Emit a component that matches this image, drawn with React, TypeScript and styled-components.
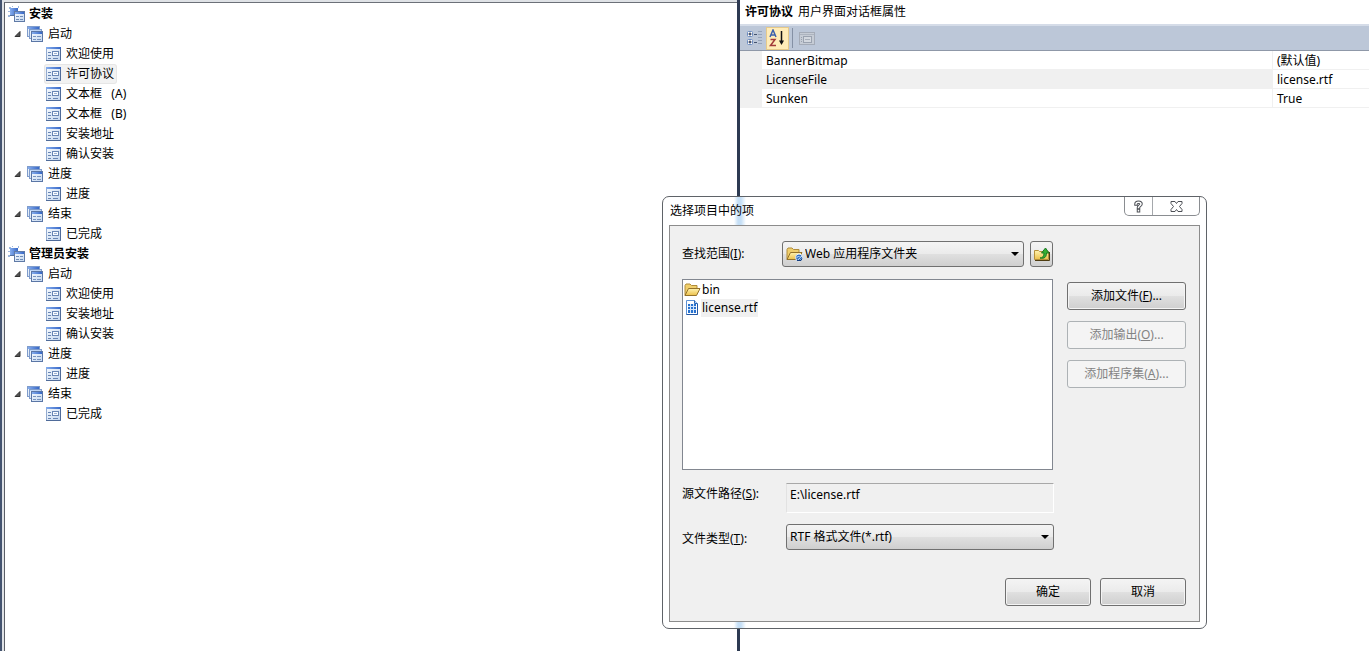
import React from 'react';
import styled, { createGlobalStyle, css } from 'styled-components';

const Global = createGlobalStyle`
  * { box-sizing: border-box; }
  body { margin: 0; background: #fff; color: #000; }
  body, button, select, input, table {
    font-family: "Noto Sans", "Noto Sans CJK SC", sans-serif;
    font-size: 12px;
    line-height: 20px;
  }
`;

const Page = styled.div`
  position: relative;
  display: grid;
  grid-template-columns: 20fr 17fr;
  min-height: 100vh;
`;

const TreePane = styled.nav`
  display: flex;
  flex-direction: column;
  border-left: 2px solid #43536f;
  border-right: 3px solid #2d3a52;
  background: #dfe2e6;
  padding: 2px 0 0 2px;
`;

const TreeBody = styled.div`
  flex: 1;
  border-left: 1px solid #5a5e66;
  border-top: 1px solid #6c7078;
  background: #fff;
  padding: 1px 0 0 3px;
`;

const List = styled.ul`
  list-style: none;
  margin: 0;
  padding: 0;
`;

const Row = styled.div<{ $level: number; $bold?: boolean }>`
  display: flex;
  align-items: center;
  height: 20px;
  padding-left: ${p => [0, 5, 37][p.$level]}px;
  gap: 4px;
  font-weight: ${p => (p.$bold ? 700 : 400)};
`;

const selection = css`
  background: #f2f2f2;
  box-shadow: 0 0 0 1px #e6e6e6;
`;

const Item = styled.span<{ $selected?: boolean }>`
  display: flex;
  align-items: center;
  gap: 5px;
  height: 18px;
  padding: 0 2px 0 1px;
  border-radius: 2px;
  white-space: pre;
  ${p => p.$selected && selection}
`;

const PropPane = styled.section`
  background: #fff;
  min-width: 0;
`;

const PropTitle = styled.h2`
  display: flex;
  gap: 5px;
  margin: 0;
  height: 24px;
  line-height: 24px;
  padding-left: 5px;
  font-size: 12px;
  font-weight: 400;
`;

const Toolbar = styled.div`
  display: flex;
  align-items: center;
  height: 27px;
  background: #bcc7d8;
  border-top: 2px solid #d5dce8;
  border-bottom: 1px solid #8f98a8;
  padding-left: 3px;
`;

const Tool = styled.button<{ $active?: boolean }>`
  display: flex;
  align-items: center;
  justify-content: center;
  width: 23px;
  height: 23px;
  padding: 0;
  border: 1px solid ${p => (p.$active ? '#e5c98a' : 'transparent')};
  background: ${p => (p.$active ? '#ffecb8' : 'transparent')};
`;

const Divider = styled.span`
  width: 1px;
  height: 20px;
  margin: 0 2px 0 3px;
  background: #8591a5;
`;

const PropTable = styled.table`
  width: 100%;
  border-collapse: separate;
  border-spacing: 0;
  table-layout: fixed;
  border-left: 22px solid #f0f0f0;
`;

const cell = css`
  height: 19px;
  line-height: 16px;
  padding: 2px 0 0 4px;
  text-align: left;
  font-weight: 400;
  border-bottom: 1px solid #f0f0f0;
`;

const Name = styled.th<{ $selected?: boolean }>`
  ${cell}
  border-right: 1px solid #f0f0f0;
  background: ${p => (p.$selected ? '#f0f0f0' : '#fff')};
`;

const Value = styled.td`
  ${cell}
  width: 96px;
`;

const Dialog = styled.div`
  position: absolute;
  left: 662px;
  top: 196px;
  width: 545px;
  border: 1px solid #5f6368;
  border-radius: 7px;
  background: linear-gradient(90deg, #fff 71px, #c5dff6 75px, #c5dff6 78px, #fff 83px);
  padding: 0 6px 6px;
`;

const TitleBar = styled.header`
  display: flex;
  justify-content: space-between;
  height: 28px;
`;

const DialogTitle = styled.h1`
  margin: 0;
  padding-left: 1px;
  font-size: 12px;
  line-height: 28px;
  font-weight: 400;
`;

const Caption = styled.div`
  display: flex;
  height: 19px;
  border: 1px solid #8a8d91;
  border-top: 0;
  border-radius: 0 0 5px 5px;
`;

const CaptionButton = styled.button<{ $wide?: boolean }>`
  display: flex;
  align-items: center;
  justify-content: center;
  width: ${p => (p.$wide ? 47 : 27)}px;
  padding: 0;
  border: 0;
  border-left: ${p => (p.$wide ? '1px solid #a5a8ac' : '0')};
  background: transparent;
`;

const Client = styled.form`
  border: 1px solid #8c8c8c;
  background: #f0f0f0;
  padding: 15px 13px 15px 12px;
`;

const Columns = styled.div`
  display: flex;
  justify-content: space-between;
  align-items: flex-start;
`;

const Main = styled.div`
  width: 372px;
`;

const Field = styled.div<{ $gap: number; $align: string }>`
  display: flex;
  align-items: ${p => p.$align};
  margin-bottom: ${p => p.$gap}px;
`;

const FieldLabel = styled.label<{ $width: number }>`
  flex: 0 0 ${p => p.$width}px;
  line-height: 22px;
`;

const raised = css`
  border: 1px solid #707070;
  border-radius: 3px;
  background: linear-gradient(#f4f4f4, #ebebeb 48%, #dfdfdf 52%, #cfcfcf);
`;

const Combo = styled.div`
  display: flex;
  align-items: center;
  gap: 2px;
  flex: 1;
  height: 26px;
  padding: 0 4px 0 3px;
  ${raised}
`;

const Select = styled.select`
  appearance: none;
  flex: 1;
  min-width: 0;
  height: 24px;
  padding: 0;
  border: 0;
  outline: 0;
  background: transparent;
  color: #000;
`;

const UpButton = styled.button`
  display: flex;
  align-items: center;
  justify-content: center;
  width: 23px;
  height: 26px;
  margin: 0 1px 0 6px;
  padding: 0;
  ${raised}
`;

const FileList = styled.ul`
  list-style: none;
  width: 371px;
  height: 191px;
  margin: 0 0 13px;
  padding: 1px;
  border: 1px solid #828790;
  background: #fff;
`;

const FileRow = styled.li`
  display: flex;
  align-items: center;
  height: 18px;
`;

const FileName = styled.span<{ $selected?: boolean }>`
  height: 18px;
  line-height: 18px;
  padding: 0 1px;
  background: ${p => (p.$selected ? '#f0f0f0' : 'transparent')};
`;

const PathBox = styled.input`
  flex: 1;
  min-width: 0;
  height: 30px;
  padding: 0 3px 8px;
  border: 1px solid #fff;
  border-top-color: #a8a8a8;
  border-left-color: #e2e2e2;
  outline: 0;
  background: #f0f0f0;
  color: #000;
`;

const Side = styled.div`
  display: flex;
  flex-direction: column;
  gap: 11px;
  padding-top: 41px;
`;

const Button = styled.button<{ $width: number }>`
  width: ${p => p.$width}px;
  height: 28px;
  padding: 0;
  color: #000;
  ${raised}
  box-shadow: inset 0 0 0 1px #f4f4f4;
  &:disabled {
    border-color: #adb2b5;
    background: #f4f4f4;
    color: #838383;
  }
`;

const Footer = styled.footer`
  display: flex;
  justify-content: flex-end;
  gap: 9px;
`;

const Gradients = () => (
  <svg width="0" height="0" style={{ position: 'absolute' }} aria-hidden="true">
    <defs>
      <linearGradient id="bar" x1="0" y1="0" x2="1" y2="0">
        <stop offset="0" stopColor="#86aeee" />
        <stop offset="1" stopColor="#3767c6" />
      </linearGradient>
      <linearGradient id="pane" x1="0" y1="0" x2="1" y2="1">
        <stop offset="0" stopColor="#f6faff" />
        <stop offset="1" stopColor="#c3d6ee" />
      </linearGradient>
      <linearGradient id="folder" x1="0" y1="0" x2="0" y2="1">
        <stop offset="0" stopColor="#fff3b0" />
        <stop offset="1" stopColor="#ecc04a" />
      </linearGradient>
    </defs>
  </svg>
);

const RootIcon = () => (
  <svg width="17" height="16" viewBox="0 0 17 16">
    <path d="M1 1h2v2H1zM4 0h1v1H4zM0 5h2v1H0zM0 9h2v2H0zM10 0h1v2h-1z" fill="#9db7de" />
    <rect x="2" y="2" width="8" height="8" fill="url(#bar)" />
    <path d="M2 9.500h4" stroke="#54719f" />
    <rect x="6.500" y="5.500" width="10" height="10" fill="url(#pane)" stroke="#5f7aa6" />
    <path d="M7 6h9v2H7z" fill="url(#bar)" />
    <path d="M8 10h3v1H8zM12 10h3v1h-3zM8 13h3v1H8zM12 13h3v1h-3z" fill="#6f8db8" />
  </svg>
);

const FolderStackIcon = () => (
  <svg width="17" height="16" viewBox="0 0 17 16">
    <rect x="0.500" y="0.500" width="12" height="10" fill="url(#pane)" stroke="#7f9ccb" />
    <path d="M1 1h11v2H1z" fill="url(#bar)" />
    <rect x="2.500" y="3.500" width="12" height="9" fill="url(#pane)" stroke="#7f9ccb" />
    <path d="M3 4h11v1H3z" fill="#bfd5f5" />
    <rect x="4.500" y="5.500" width="11" height="10" fill="url(#pane)" stroke="#5a76a6" />
    <path d="M5 6h10v2H5z" fill="url(#bar)" />
    <path d="M6 10h3v1H6zM10 10h4v1h-4zM6 13h3v1H6zM10 13h4v1h-4z" fill="#7894bf" />
  </svg>
);

const FormIcon = () => (
  <svg width="15" height="14" viewBox="0 0 15 14">
    <rect x="0.500" y="0.500" width="14" height="13" fill="url(#pane)" stroke="#93abd0" />
    <path d="M14.500 0v13.500H0" fill="none" stroke="#4f6b99" />
    <path d="M0 0h15v2H0z" fill="url(#bar)" />
    <path d="M2 5h3v1H2zM2 8h3v1H2zM2 11h3v1H2zM7 11h5v1H7z" fill="#6886b4" />
    <rect x="6.500" y="4.500" width="6" height="4" fill="#f8fbff" stroke="#6886b4" />
    <path d="M8 6.500h3" stroke="#9bb2d3" />
  </svg>
);

const Expander = () => (
  <svg width="10" height="8" viewBox="0 0 10 8">
    <path d="M7 1.500v5H2z" fill="#555" stroke="#333" strokeLinejoin="round" />
  </svg>
);

const CategoryIcon = () => (
  <svg width="17" height="16" viewBox="0 0 17 16">
    <g fill="#fff" stroke="#6c8cc0">
      <rect x="1.500" y="1.500" width="5" height="5" rx="1" />
      <rect x="1.500" y="9.500" width="5" height="5" rx="1" />
    </g>
    <path d="M2.500 4h3M4 2.500v3M2.500 12h3M4 10.500v3" stroke="#111c3a" />
    <path d="M8 4.500h3M8 12.500h3" stroke="#44536f" />
    <path d="M12 1.500h4M12 4.500h4M12 7.500h4M12 10.500h4M12 13.500h4" stroke="#96a4ba" />
  </svg>
);

const SortIcon = () => (
  <svg width="17" height="18" viewBox="0 0 17 18">
    <path d="M1 8L4 1l3 7M2 6h4" fill="none" stroke="#3c60ac" strokeWidth="1.500" />
    <path d="M1.500 10.500H6L1.500 16.500H7" fill="none" stroke="#a23a3a" strokeWidth="1.500" />
    <path d="M12.500 2v12" stroke="#111" strokeWidth="1.500" />
    <path d="M10 11.500h5l-2.500 4.500z" fill="#111" />
  </svg>
);

const PagesIcon = () => (
  <svg width="16" height="15" viewBox="0 0 16 15">
    <rect x="0.500" y="1.500" width="15" height="12" fill="#c6ccd5" stroke="#a4abb7" />
    <path d="M1 3.500h14" stroke="#adb4bf" />
    <rect x="4.500" y="5.500" width="8" height="6" fill="#d3d8df" stroke="#9aa2af" />
    <path d="M6 8.500h5" stroke="#a8afba" />
    <path d="M2 6h1v1H2zM2 8h1v1H2zM2 10h1v1H2z" fill="#99a1ae" />
  </svg>
);

const FolderIcon = ({ web }: { web?: boolean }) => (
  <svg width="17" height="16" viewBox="0 0 17 16">
    <path d="M1 13.500V3.500l1-1.500h4l1.500 1.500H13v3" fill="#f0cf6c" stroke="#b08c3a" />
    <path d="M1 13.500l3.500-7H16l-3.500 7z" fill="url(#folder)" stroke="#94722a" />
    {web && (
      <g>
        <circle cx="13" cy="11.500" r="3.500" fill="#2f6dc0" stroke="#e8f0fa" />
        <path d="M10.500 12l2-2 1.500 1.500 2-1.500M11.500 14l2-1.500 1 1" fill="none" stroke="#d5ecff" />
        <path d="M11 14.500h4l1-2" fill="none" stroke="#143e80" />
      </g>
    )}
  </svg>
);

const FileIcon = () => (
  <svg width="17" height="16" viewBox="0 0 17 16">
    <path d="M2.500 0.500h8l3 3v11h-11z" fill="#fff" stroke="#5e92d4" />
    <path d="M13.500 4v10.500h-11" fill="none" stroke="#2458a4" />
    <path d="M10.500 0.500v3h3" fill="#b5d0f2" stroke="#2b66b5" />
    <path d="M4 4h8v9H4z" fill="#2872cf" />
    <path d="M4 6.500h8M4 9.500h8M6.500 4v9M9.500 4v9" stroke="#d5e6fa" />
  </svg>
);

const UpFolderIcon = () => (
  <svg width="16" height="16" viewBox="0 0 16 16">
    <path d="M0.500 13.500v-9h4l1 1h9v8z" fill="url(#folder)" stroke="#b5903a" />
    <path d="M1 14.500h14.500V6" fill="none" stroke="#4d3b10" />
    <path d="M6 12c2.500 0 4-1.500 4-5H7.500l4-5 3.500 5h-2.500c0 4-2 6-6.500 5z" fill="#35ae35" stroke="#1c7a22" />
  </svg>
);

const Arrow = () => (
  <svg width="8" height="4" viewBox="0 0 8 4" pointerEvents="none"><path d="M0 0h8L4 4z" /></svg>
);

const HelpIcon = () => (
  <svg width="11" height="13" viewBox="0 0 11 13" fill="none" strokeLinecap="square">
    <path d="M3 4C3 1.500 8 1.500 8 4c0 1.500-2.500 2-2.500 3.500M5.500 10.500v0.200" stroke="#4c4f55" strokeWidth="3.500" />
    <path d="M3 4C3 1.500 8 1.500 8 4c0 1.500-2.500 2-2.500 3.500M5.500 10.500v0.200" stroke="#fff" strokeWidth="1.500" />
  </svg>
);

const CloseIcon = () => (
  <svg width="13" height="11" viewBox="0 0 13 11">
    <path d="M1 0.500h4l1.500 2 1.500-2h4v2L9.500 5.500l2.500 3v2H8l-1.500-2-1.500 2H1v-2l2.500-3L1 2.500z" fill="#fff" stroke="#4c4f55" />
  </svg>
);

type Group = { name: string; items: string[] };
const tree: { name: string; groups: Group[] }[] = [
  {
    name: '安装',
    groups: [
      { name: '启动', items: ['欢迎使用', '许可协议', '文本框   (A)', '文本框   (B)', '安装地址', '确认安装'] },
      { name: '进度', items: ['进度'] },
      { name: '结束', items: ['已完成'] },
    ],
  },
  {
    name: '管理员安装',
    groups: [
      { name: '启动', items: ['欢迎使用', '安装地址', '确认安装'] },
      { name: '进度', items: ['进度'] },
      { name: '结束', items: ['已完成'] },
    ],
  },
];

const properties = [
  ['BannerBitmap', '(默认值)'],
  ['LicenseFile', 'license.rtf'],
  ['Sunken', 'True'],
];

export default function App() {
  return (
    <>
      <Global />
      <Gradients />
      <Page>
        <TreePane>
          <TreeBody>
            <List>
              {tree.map(root => (
                <li key={root.name}>
                  <Row $level={0} $bold><RootIcon /><span>{root.name}</span></Row>
                  <List>
                    {root.groups.map(group => (
                      <li key={group.name}>
                        <Row $level={1}><Expander /><FolderStackIcon /><span>{group.name}</span></Row>
                        <List>
                          {group.items.map(item => (
                            <li key={item}>
                              <Row $level={2}>
                                <Item $selected={item === '许可协议'}><FormIcon /><span>{item}</span></Item>
                              </Row>
                            </li>
                          ))}
                        </List>
                      </li>
                    ))}
                  </List>
                </li>
              ))}
            </List>
          </TreeBody>
        </TreePane>

        <PropPane>
          <PropTitle><b>许可协议</b><span>用户界面对话框属性</span></PropTitle>
          <Toolbar>
            <Tool type="button" aria-label="按分类顺序"><CategoryIcon /></Tool>
            <Tool type="button" aria-label="字母顺序" $active><SortIcon /></Tool>
            <Divider />
            <Tool type="button" aria-label="属性页"><PagesIcon /></Tool>
          </Toolbar>
          <PropTable>
            <tbody>
              {properties.map(([name, value]) => (
                <tr key={name}>
                  <Name scope="row" $selected={name === 'LicenseFile'}>{name}</Name>
                  <Value>{value}</Value>
                </tr>
              ))}
            </tbody>
          </PropTable>
        </PropPane>

        <Dialog role="dialog" aria-labelledby="dialog-title">
          <TitleBar>
            <DialogTitle id="dialog-title">选择项目中的项</DialogTitle>
            <Caption>
              <CaptionButton type="button" aria-label="帮助"><HelpIcon /></CaptionButton>
              <CaptionButton type="button" aria-label="关闭" $wide><CloseIcon /></CaptionButton>
            </Caption>
          </TitleBar>
          <Client onSubmit={e => e.preventDefault()}>
            <Columns>
              <Main>
                <Field $gap={12} $align="center">
                  <FieldLabel htmlFor="look-in" $width={100}>查找范围(<u>I</u>):</FieldLabel>
                  <Combo>
                    <FolderIcon web />
                    <Select id="look-in"><option>Web 应用程序文件夹</option></Select>
                    <Arrow />
                  </Combo>
                  <UpButton type="button" aria-label="向上一级"><UpFolderIcon /></UpButton>
                </Field>
                <FileList>
                  <FileRow><FolderIcon /><FileName>bin</FileName></FileRow>
                  <FileRow><FileIcon /><FileName $selected>license.rtf</FileName></FileRow>
                </FileList>
                <Field $gap={11} $align="flex-start">
                  <FieldLabel htmlFor="source" $width={104}>源文件路径(<u>S</u>):</FieldLabel>
                  <PathBox id="source" readOnly value="E:\license.rtf" />
                </Field>
                <Field $gap={28} $align="flex-end">
                  <FieldLabel htmlFor="file-type" $width={104}>文件类型(<u>T</u>):</FieldLabel>
                  <Combo>
                    <Select id="file-type"><option>RTF 格式文件(*.rtf)</option></Select>
                    <Arrow />
                  </Combo>
                </Field>
              </Main>
              <Side>
                <Button type="button" $width={119}>添加文件(<u>F</u>)...</Button>
                <Button type="button" $width={119} disabled>添加输出(<u>O</u>)...</Button>
                <Button type="button" $width={119} disabled>添加程序集(<u>A</u>)...</Button>
              </Side>
            </Columns>
            <Footer>
              <Button type="submit" $width={86}>确定</Button>
              <Button type="button" $width={86}>取消</Button>
            </Footer>
          </Client>
        </Dialog>
      </Page>
    </>
  );
}
